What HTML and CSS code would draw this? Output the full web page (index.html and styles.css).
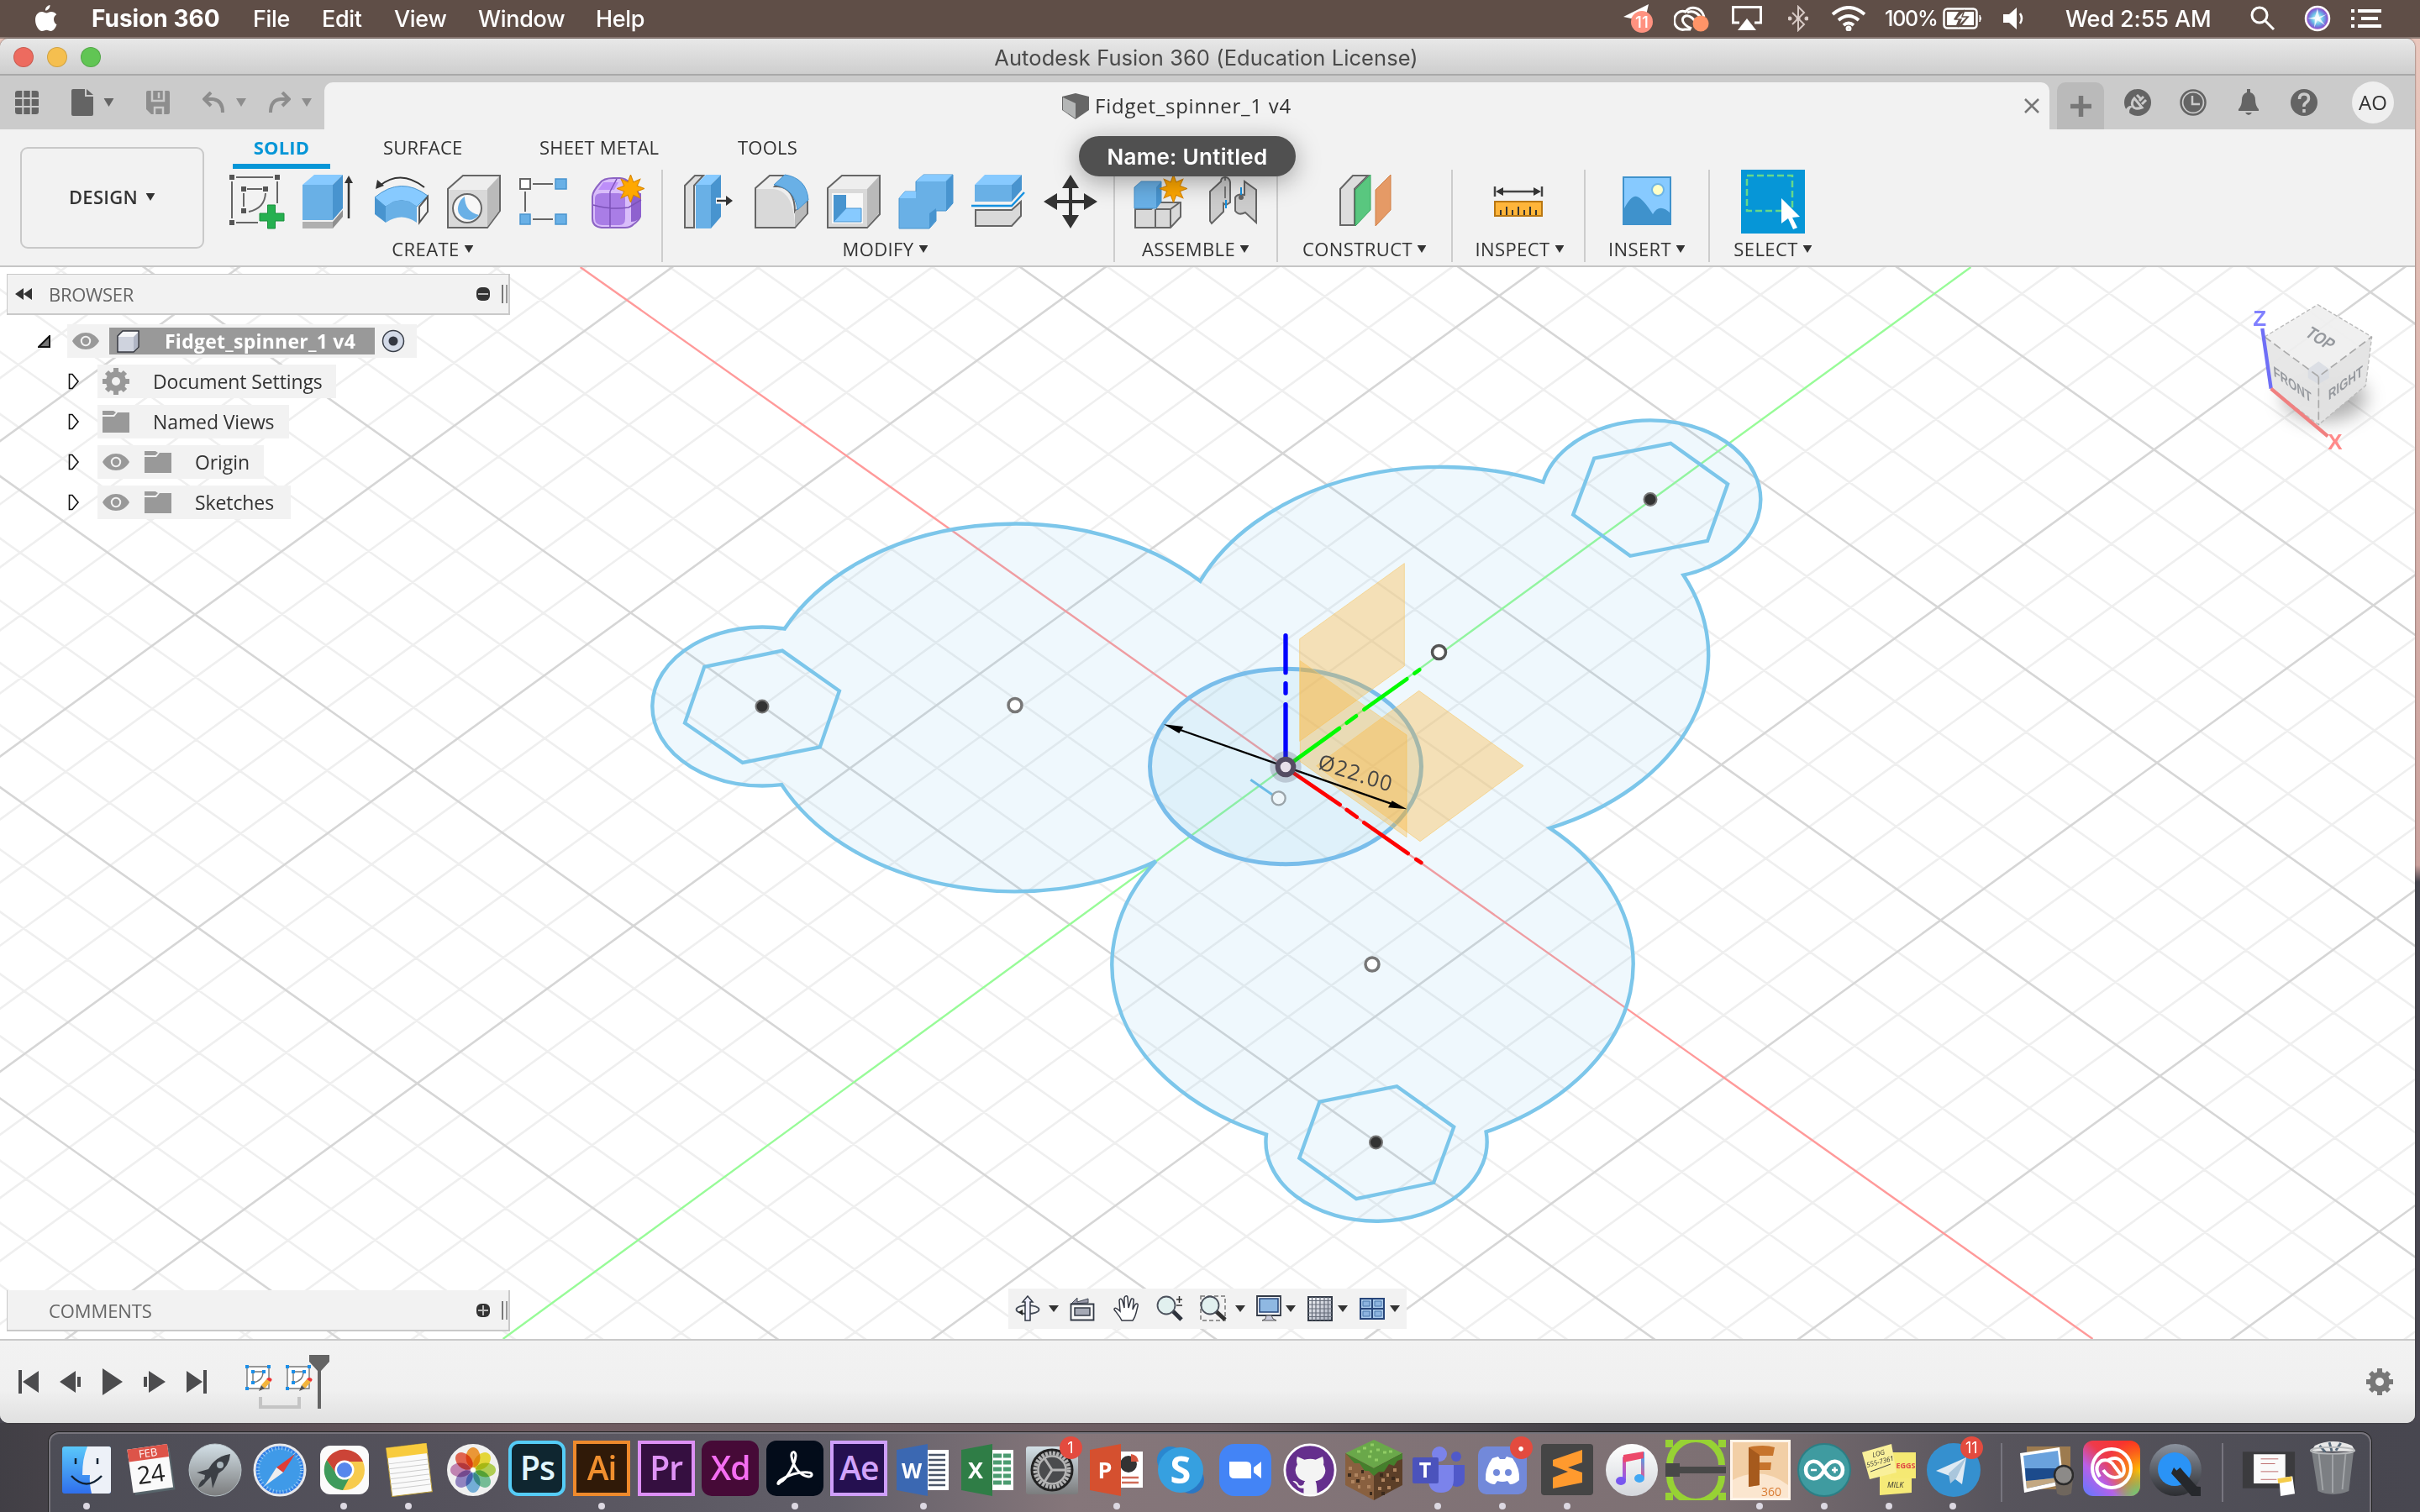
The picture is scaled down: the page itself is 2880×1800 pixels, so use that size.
FILE: index.html
```html
<!DOCTYPE html>
<html lang="en">
<head>
<meta charset="utf-8">
<title>Autodesk Fusion 360</title>
<link rel="stylesheet" href="styles.css">
</head>
<body>
<svg class="defs" width="0" height="0">
  <defs>
    <symbol id="eye" viewBox="0 0 32 20"><path d="M0 10C4 3 10 0 16 0s12 3 16 10c-4 7-10 10-16 10S4 17 0 10z" fill="#999"/><circle cx="16" cy="10" r="5.2" fill="#999" stroke="#f2f2f2" stroke-width="2"/></symbol>
    <symbol id="folder" viewBox="0 0 32 26"><path d="M0 0h13l3 2-3 3H0z" fill="#999"/><path d="M0 7h14l4-5h14v24H0z" fill="#999"/></symbol>
    <symbol id="closed" viewBox="0 0 14 20"><path d="M1.5 1.5h3.5l7 8.5-7 8.5H1.5z" fill="#fff" stroke="#111" stroke-width="1.6"/></symbol>
    <symbol id="down" viewBox="0 0 12 10"><path d="M0 0h12L6 10z" fill="currentColor"/></symbol>
    <symbol id="star" viewBox="-16 -16 32 32"><path d="M0-16 3.2-7.5 11-11 7.5-3.2 16 0 7.5 3.2 11 11 3.2 7.5 0 16-3.2 7.5-11 11-7.5 3.2-16 0-7.5-3.2-11-11-3.2-7.5z" fill="#ffa800" stroke="#d98600" stroke-width="1"/></symbol>
    <symbol id="sketchstep" viewBox="0 0 32 32"><path d="M2 2h26v26H2zM9 8h12q0 11-12 13z" fill="#fff" stroke="#777" stroke-width="1.4"/><path d="M0 0h4v4H0zM26 0h4v4h-4zM0 26h4v4H0zM7 6h4v4H7zM20 6h4v4h-4zM7 19h4v4H7z" fill="#1c8fe8"/><path d="M19 24l6-7 5 3-7 8z" fill="#f4b53c"/><path d="M25 17q2-3 5-1.500t0 4.500z" fill="#e33"/><path d="M19 24l4 4-7 3z" fill="#555"/></symbol>
    <linearGradient id="aqua" x2="0" y2="1"><stop offset="0" stop-color="#5ac8fa"/><stop offset="1" stop-color="#2f6fed"/></linearGradient>
    <linearGradient id="silver" x2="0" y2="1"><stop offset="0" stop-color="#d3e0e7"/><stop offset="1" stop-color="#7b7c7d"/></linearGradient>
    <linearGradient id="pearl" x2="0" y2="1"><stop offset="0" stop-color="#fff"/><stop offset="1" stop-color="#d4d7dc"/></linearGradient>
    <linearGradient id="steel" x2="1" y2="1"><stop offset="0" stop-color="#f7f8fb"/><stop offset="1" stop-color="#a9afbd"/></linearGradient>
    <linearGradient id="slate" x2="0" y2="1"><stop offset="0" stop-color="#8b929e"/><stop offset="1" stop-color="#2c2d31"/></linearGradient>
    <linearGradient id="note" y1="1" x2="1" y2="0"><stop offset="0" stop-color="#8a5cf0"/><stop offset=".5" stop-color="#f0508a"/><stop offset="1" stop-color="#3fa9f5"/></linearGradient>
    <linearGradient id="rainbow" x1="0" y1="1" x2="1" y2="0"><stop offset="0" stop-color="#5b7bff"/><stop offset=".3" stop-color="#b860e8"/><stop offset=".55" stop-color="#ee3b4b"/><stop offset="1" stop-color="#ff2d1c"/></linearGradient>
    <radialGradient id="sun" cx="1" cy=".55" r=".6"><stop offset="0" stop-color="#ffc400"/><stop offset="1" stop-color="#ff8a00" stop-opacity="0"/></radialGradient>
    <radialGradient id="leaf" cx="1" cy="1" r=".5"><stop offset="0" stop-color="#5fd87a"/><stop offset="1" stop-color="#5fd87a" stop-opacity="0"/></radialGradient>
    <radialGradient id="siri"><stop offset="0" stop-color="#fff"/><stop offset=".45" stop-color="#6dc7e8"/><stop offset=".8" stop-color="#7a62d8"/><stop offset="1" stop-color="#cf5bb0"/></radialGradient>
  </defs>
</svg>

<header class="menubar">
  <svg class="apple" width="26" height="32" viewBox="0 0 26 32"><path d="M17.500 0c.3 3-2.300 6.500-5.500 6.600C11.600 3.600 14.500.4 17.500 0zM22 17c0-3 1.500-4.600 3.300-5.800C23.600 9 21.300 8 19 8c-2.500 0-4 1.400-5.600 1.400C11.700 9.400 10 8 7.700 8 4 8 0 11.300 0 17.700 0 24.500 4.500 31 8 31c2 0 3-1.300 5.400-1.300S16.500 31 18.500 31c3 0 5.800-4.200 7-7.800C23.400 22.200 22 20 22 17z" fill="#fff"/></svg>
  <span class="menu m-name">Fusion 360</span><span class="menu m-file">File</span><span class="menu m-edit">Edit</span><span class="menu m-view">View</span><span class="menu m-window">Window</span><span class="menu">Help</span>
  <div class="status">
    <svg width="36" height="34" viewBox="0 0 36 34"><path d="M0 15 30 0 25 22 12 21 17 14 9 17z" fill="#fff"/><circle cx="22" cy="21" r="13" fill="#ff9280"/><text x="22" y="28" font-size="19" class="badgetext">11</text></svg>
    <svg width="44" height="32" viewBox="0 0 44 32"><g fill="none" stroke="#fff" stroke-width="3"><path d="M20 29H13a10 11 0 1 1 1-21C19 1 32 1 36 14"/><path d="M21 28C9 23 8 15 14 13s11 6 15 11M16 9c8-4 15 3 17 8"/></g><circle cx="32" cy="22" r="9.500" fill="#ff9468"/></svg>
    <svg width="38" height="30" viewBox="0 0 38 30"><path d="M10 20H2.500V1.500h33V20H28" fill="none" stroke="#fff" stroke-width="3"/><path d="M19 15l11 14H8z" fill="#fff"/></svg>
    <svg width="24" height="32" viewBox="0 0 24 32" fill="none" stroke="#d6c9c4" stroke-width="2"><path d="M5 9l14 14-7 7V2l7 7L5 23"/><circle cx="2" cy="16" r="1.500" fill="#fff"/><circle cx="22" cy="16" r="1.500" fill="#fff"/><circle cx="12" cy="16" r="1.500" fill="#fff"/></svg>
    <svg width="42" height="30" viewBox="0 0 42 30" fill="none" stroke="#fff" stroke-width="4"><path d="M2 10q19-16 38 0M9 17q12-10 24 0M15 23q6-5 12 0"/><circle cx="21" cy="27" r="1.500"/></svg>
    <span class="pct">100%</span>
    <svg width="48" height="26" viewBox="0 0 48 26"><rect x="1.500" y="1.500" width="39" height="23" rx="4" fill="none" stroke="#fff" stroke-width="2.500"/><path d="M5 5h14l-6 9h6l-3 7H5zM24 5h13v16H23l8-10h-7z" fill="#fff"/><path d="M26 3 15 14h7l-4 9 12-12h-7z" fill="#fff" stroke="#5f4e47" stroke-width="1.500"/><path d="M44 9v8q3-4 0-8z" fill="#fff" stroke="#fff"/></svg>
    <svg width="28" height="26" viewBox="0 0 28 26"><path d="M0 8h7l9-8v26l-9-8H0z" fill="#fff"/><path d="M20 7q4 6 0 12" stroke="#fff" stroke-width="2.500" fill="none"/></svg>
    <span class="clock">Wed 2:55 AM</span>
    <svg width="30" height="30" viewBox="0 0 30 30" fill="none" stroke="#fff" stroke-width="3"><circle cx="11" cy="11" r="9"/><path d="M18 18l10 10"/></svg>
    <svg width="32" height="32" viewBox="0 0 32 32"><circle cx="16" cy="16" r="14" fill="url(#siri)" stroke="#fff" stroke-width="2.500"/><path d="M16 4l2 10 9-3-8 5 6 8-9-6-4 9 1-10-9-1 9-2z" fill="#fff" opacity=".8"/></svg>
    <svg width="36" height="24" viewBox="0 0 36 24" stroke="#fff" stroke-width="4"><path d="M0 3h4M8 3h28M0 12h4M12 12h20M0 21h4M8 21h28"/></svg>
  </div>
</header>

<main class="window">
  <div class="titlebar"><i class="light red"></i><i class="light amber"></i><i class="light green"></i><span>Autodesk Fusion 360 (Education License)</span></div>

  <div class="tabstrip">
    <div class="quick">
      <svg width="28" height="28" viewBox="0 0 28 28"><rect width="28" height="28" rx="3" fill="#646464"/><path d="M9.300 0v28M18.700 0v28M0 9h28M0 19h28" stroke="#cbcbcb" stroke-width="2"/></svg>
      <svg class="q-file" width="26" height="32" viewBox="0 0 26 32"><path d="M2 0h14v9h10v21q0 2-2 2H2q-2 0-2-2V2q0-2 2-2zM18 0l8 7h-8z" fill="#646464"/></svg>
      <svg class="q-down dark" width="15" height="10" viewBox="0 0 12 10"><use href="#down"/></svg>
      <svg class="q-save" width="28" height="28" viewBox="0 0 28 28"><path d="M0 2q0-2 2-2h24q2 0 2 2v24q0 2-2 2H6l-6-6z" fill="#8d8d8d"/><path d="M7 0v12h14V0M10 28v-8h10v8M15 2v7" fill="none" stroke="#cbcbcb" stroke-width="2.500"/></svg>
      <svg class="q-undo" width="27" height="26" viewBox="0 0 27 26" fill="none" stroke="#8d8d8d" stroke-width="4"><path d="M10 1 2 9l8 8M2 9h10q12 1 12 16"/></svg>
      <svg class="q-down" width="14" height="10" viewBox="0 0 12 10"><use href="#down"/></svg>
      <svg class="q-redo" width="27" height="26" viewBox="0 0 27 26" fill="none" stroke="#8d8d8d" stroke-width="4"><path d="M17 1l8 8-8 8M25 9H15Q3 10 3 25"/></svg>
      <svg class="q-down" width="14" height="10" viewBox="0 0 12 10"><use href="#down"/></svg>
    </div>
    <div class="doctab">
      <svg width="32" height="31" viewBox="0 0 32 31"><path d="M0 4 16 0l16 4v16L16 31 0 20z" fill="#666"/><path d="M1 5l15 7v18L1 20z" fill="#b4b6b6"/></svg>
      <span>Fidget_spinner_1 v4</span>
      <svg class="close" width="18" height="18" viewBox="0 0 18 18"><path d="M1 1l16 16M17 1 1 17" stroke="#777" stroke-width="2.500"/></svg>
    </div>
    <div class="addtab"><svg width="25" height="25" viewBox="0 0 25 25"><path d="M12.500 0v25M0 12.500h25" stroke="#777" stroke-width="5.500"/></svg></div>
    <div class="utils">
      <svg width="32" height="32" viewBox="0 0 32 32"><circle cx="16" cy="16" r="16" fill="#646464"/><path d="M12 11l9 11q-9 3-11-2t2-9zM15 7l4 4M23 9l-5 5M26 13l-5 5" fill="none" stroke="#cbcbcb" stroke-width="3"/><path d="M0 32 2 24q4-6 8-3-6 3-3 10z" fill="#cbcbcb"/></svg>
      <svg width="32" height="32" viewBox="0 0 32 32"><circle cx="16" cy="16" r="14.500" fill="#cbcbcb" stroke="#646464" stroke-width="2.500"/><circle cx="16" cy="16" r="11.500" fill="#646464"/><path d="M15 8v10h9" fill="none" stroke="#cbcbcb" stroke-width="2.500"/></svg>
      <svg width="32" height="32" viewBox="0 0 32 32"><path d="M14 0h4v4q6 2 6 9 0 7 4 11v2H4v-2q4-4 4-11 0-7 6-9zM12 28h8q-4 6-8 0z" fill="#646464"/></svg>
      <svg width="32" height="32" viewBox="0 0 32 32"><circle cx="16" cy="16" r="16" fill="#646464"/><path d="M10.500 12q0-6 5.500-6t5.500 5q0 3-3 5t-2.500 5M16 24v4" fill="none" stroke="#cbcbcb" stroke-width="3.500"/></svg>
      <span class="avatar">AO</span>
    </div>
  </div>

  <div class="ribbon">
    <div class="workspace">DESIGN<svg width="12" height="9" viewBox="0 0 12 10"><use href="#down"/></svg></div>
    <div class="ribbonmain">
      <div class="modes"><span class="mode active">SOLID</span><span class="mode surface">SURFACE</span><span class="mode sheet">SHEET METAL</span><span class="mode">TOOLS</span></div>
      <div class="groups">
        <section class="group g-create">
          <div class="icons">
            <svg width="64" height="64" viewBox="0 0 64 64"><path d="M7 3h44M2 8v44M7 57h26M56 8v26M20 17h18M16 22v16M42 22q-1 18-20 22" fill="none" stroke="#666" stroke-width="2"/><path d="M-1 0h6v6h-6zM53 0h6v6h-6zM-1 54h6v6h-6zM13 14h6v6h-6zM39 14h6v6h-6zM13 40h6v6h-6z" fill="#555"/><path d="M44.500 36h9v10H64v9H53.500v9h-9v-9H35v-9h9.500z" fill="#26b050" stroke="#17903b"/></svg>
            <svg width="64" height="64" viewBox="0 0 64 64"><path d="M0 56h36v8H0z" fill="#b0b0b0"/><path d="M36 56l12-14v8L36 64z" fill="#8f8f8f"/><path d="M0 12h36v42H0z" fill="#69b0e6"/><path d="M0 12 14 0h34L36 12z" fill="#87caff"/><path d="M36 12 48 0v40L36 54z" fill="#4894cf"/><path d="M55 52V8" stroke="#333" stroke-width="2.500"/><path d="M50 10l5-9 5 9z" fill="#333"/></svg>
            <svg width="64" height="64" viewBox="0 0 64 64"><path d="M6 13Q31-7 59 15" fill="none" stroke="#333" stroke-width="2"/><path d="M1 17 3 6l8 7z" fill="#333"/><path d="M0 27q31-26 63-2L50 38q-18-15-37 0z" fill="#87caff" stroke="#4894cf"/><path d="M13 38q19-15 37 0v19q-18-13-37 0z" fill="#69b0e6"/><path d="M0 27l13 11v19L0 47z" fill="#4894cf"/><path d="M63 26v18L53 57V38z" fill="#f5f5f5" stroke="#555" stroke-width="2"/></svg>
            <svg width="64" height="64" viewBox="0 0 64 64"><path d="M1 63V17L19 1h44v42L48 63z" fill="#eee" stroke="#666" stroke-width="2"/><path d="M2 18h46v44H2z" fill="#d9d9d9"/><path d="M48 17 62 2v41L48 62z" fill="#bababa"/><circle cx="24" cy="40" r="17" fill="#f7f7f7" stroke="#666" stroke-width="2"/><path d="M21 26q0 18 17 22-8 9-18 4-10-6-6-17 2-6 7-9z" fill="#69b0e6"/></svg>
            <svg width="64" height="64" viewBox="0 0 64 64"><path d="M16 11h24M7 20v24M16 53h24" stroke="#666" stroke-width="2"/><path d="M1 5h12v12H1z" fill="#fff" stroke="#666" stroke-width="2"/><path d="M43 5h13v12H43zM1 47h12v12H1zM43 47h13v12H43z" fill="#69b0e6" stroke="#4894cf" stroke-width="1.500"/></svg>
            <svg width="64" height="64" viewBox="0 0 64 64"><path d="M1 26Q1 20 10 10q4-6 16-6h8q6 0 12 6l12 14v26q-2 5-8 9-4 4-10 4H12Q1 62 1 52z" fill="#d9bdfa" stroke="#8c63c4" stroke-width="2"/><path d="M4 28q0-6 8-6h20q8 0 8 6v24q0 8-7 8H13q-9 0-9-8z" fill="#a97de6"/><path d="M47 24 59 22v26q-3 8-12 8z" fill="#8e61cf"/><path d="M14 9h18l-5 9H8z" fill="#bd8ef9"/><path d="M22 20v42M2 36q20 6 42 3l15-9M22 20l8-15" stroke="#7c52b8" stroke-width="1.500" fill="none"/><use href="#star" x="30" y="0" width="33" height="33"/></svg>
          </div>
          <div class="label">CREATE<svg width="12" height="9" viewBox="0 0 12 10"><use href="#down"/></svg></div>
        </section>
        <section class="group g-modify">
          <div class="icons">
            <svg width="64" height="64" viewBox="0 0 64 64"><path d="M3 63V13L15 1h10L14 13v50z" fill="#ddd" stroke="#666" stroke-width="2"/><path d="M16 12h18v52H16z" fill="#69b0e6"/><path d="M16 12 28 0h18L34 12z" fill="#87caff"/><path d="M34 12 46 0v50L34 64z" fill="#4894cf"/><path d="M40 31h14" stroke="#fff" stroke-width="7"/><path d="M41 31h14" stroke="#333" stroke-width="2.500"/><path d="M52 25l8 6-8 6z" fill="#333"/></svg>
            <svg width="64" height="64" viewBox="0 0 64 64"><path d="M1 63V16L18 1h18L24 14h4q20 2 20 30l15-14v16L48 63z" fill="#eee" stroke="#666" stroke-width="2"/><path d="M2 17h20q25 2 26 45H2z" fill="#d9d9d9"/><path d="M48 44l14-13v15L48 62z" fill="#bababa"/><path d="M23 12 36 0q26 4 28 30L51 42Q48 16 23 12z" fill="#69b0e6" stroke="#4894cf"/></svg>
            <svg width="64" height="64" viewBox="0 0 64 64"><path d="M1 63V16L18 1h45v46L48 63z" fill="#eee" stroke="#666" stroke-width="2"/><path d="M2 17h46v45H2z" fill="#d9d9d9"/><path d="M48 17 62 2v44L48 62z" fill="#bababa"/><path d="M6 22h37v36H6z" fill="#f8f8f8"/><path d="M8 24h15v17L8 56z" fill="#4894cf"/><path d="M23 40h18v16H8z" fill="#87caff" stroke="#4894cf"/></svg>
            <svg width="64" height="64" viewBox="0 0 64 64"><path d="M0 28l7-8h13V8l9-8h35v34l-8 9H44v12l-8 9H0z" fill="#69b0e6" stroke="#4894cf"/><path d="M20 8l9-8h34l-8 8zM0 28l7-8h13v8z" fill="#87caff"/><path d="M56 8l8-8v34l-8 9zM36 46l8-6v14l-8 10z" fill="#4894cf"/></svg>
            <svg width="64" height="64" viewBox="0 0 64 64"><path d="M4 12h44v20H4z" fill="#69b0e6"/><path d="M4 12 16 0h44L48 12z" fill="#87caff"/><path d="M48 12 60 0v18L48 32z" fill="#4894cf"/><path d="M0 37h48L63 21" fill="none" stroke="#1591e0" stroke-width="2.500"/><path d="M5 42v19h43l11-12V32L48 42z" fill="#d9d9d9" stroke="#666" stroke-width="2"/></svg>
            <svg width="64" height="64" viewBox="0 0 64 64"><path d="M32 10v44M10 32h44" stroke="#333" stroke-width="4"/><path d="M32 0l10 16H22zM32 64l10-16H22zM0 32l16-10v20zM64 32 48 22v20z" fill="#333"/></svg>
          </div>
          <div class="label">MODIFY<svg width="12" height="9" viewBox="0 0 12 10"><use href="#down"/></svg></div>
        </section>
        <section class="group g-assemble">
          <div class="icons">
            <svg width="64" height="64" viewBox="0 0 64 64"><path d="M1 41v22h42l12-13V33H28L20 41z" fill="#d9d9d9" stroke="#666" stroke-width="2"/><path d="M25 41v22M26 41h17l11-8M43 41v21" stroke="#666" stroke-width="2" fill="none"/><path d="M0 15 8 8h24v24l-6 8H0z" fill="#69b0e6" stroke="#4894cf"/><path d="M26 15l6-7v24l-6 8z" fill="#4894cf"/><use href="#star" x="30" y="0" width="33" height="33"/></svg>
            <svg width="64" height="64" viewBox="0 0 64 64"><path d="M4 20 17 8q0-5 5-5t6 6v24l-5 3-3-2v10L6 58l-2-3z" fill="#ccc" stroke="#666" stroke-width="2"/><path d="M22 28V14M22 4v3" stroke="#777" stroke-width="2"/><path d="M59 57V18L45 8v16q-8-2-11 3v16q4 6 12 2z" fill="#ccc" stroke="#666" stroke-width="2"/><path d="M23 30v10M41 15v12" stroke="#1591e0" stroke-width="2"/><circle cx="41" cy="27" r="3" fill="#666"/></svg>
          </div>
          <div class="label">ASSEMBLE<svg width="12" height="9" viewBox="0 0 12 10"><use href="#down"/></svg></div>
        </section>
        <section class="group g-construct">
          <div class="icons"><svg width="64" height="64" viewBox="0 0 64 64"><path d="M3 60V17L18 1h18L20 17v43z" fill="#ddd" stroke="#666" stroke-width="2"/><path d="M21 18 39 0v42L21 61z" fill="#59c77f" stroke="#38a860"/><path d="M45 18 63 0v42L45 61z" fill="#e59a66" stroke="#d07f45"/></svg></div>
          <div class="label">CONSTRUCT<svg width="12" height="9" viewBox="0 0 12 10"><use href="#down"/></svg></div>
        </section>
        <section class="group g-inspect">
          <div class="icons"><svg width="64" height="64" viewBox="0 0 64 64"><path d="M4 14v12M60 14v12M12 20h40" stroke="#444" stroke-width="2.500"/><path d="M5 20l9-5v10zM59 20l-9-5v10z" fill="#333"/><path d="M4 32h56v17H4z" fill="#ffb53a" stroke="#b97712" stroke-width="2"/><path d="M11 42v6M18 38v10M25 42v6M32 38v10M39 42v6M46 38v10M53 42v6" stroke="#333" stroke-width="2"/></svg></div>
          <div class="label">INSPECT<svg width="12" height="9" viewBox="0 0 12 10"><use href="#down"/></svg></div>
        </section>
        <section class="group g-insert">
          <div class="icons"><svg width="64" height="64" viewBox="0 0 64 64"><path d="M4 3h56v56H4z" fill="#87caff" stroke="#3f92cc" stroke-width="2"/><circle cx="45" cy="18" r="7" fill="#ffffc8" stroke="#6fb5e5" stroke-width="2"/><path d="M4 42q9-18 16-16t19 21q8-14 21-1v13H4z" fill="#3f92cc"/></svg></div>
          <div class="label">INSERT<svg width="12" height="9" viewBox="0 0 12 10"><use href="#down"/></svg></div>
        </section>
        <section class="group g-select">
          <div class="icons"><svg class="big" width="76" height="76" viewBox="0 0 76 76"><path d="M0 0h76v76H0z" fill="#0696d7"/><path d="M7 7h54v42H7z" fill="none" stroke="#66d98a" stroke-width="2.500" stroke-dasharray="8 4"/><path d="M48 34l22 22-9 1 6 12-5 2-6-13-8 6z" fill="#fff"/></svg></div>
          <div class="label">SELECT<svg width="12" height="9" viewBox="0 0 12 10"><use href="#down"/></svg></div>
        </section>
      </div>
    </div>
    <div class="pill">Name: Untitled</div>
  </div>

  <div class="viewport">
    <svg class="canvas" width="2874" height="1276" viewBox="0 318 2874 1276">
      <path id="minor" class="minor"/>
      <path id="major" class="major"/>
      <path d="M690.600 318 2490.500 1594" stroke="#ff9a9a" stroke-width="2.400"/>
      <path d="M2345.500 318 1530 912.500 598.600 1594" stroke="#98fb98" stroke-width="2.400" fill="none"/>
      <path class="profile" d="M933.800 748.500A304.500 220.500 0 0 1 1428.400 691.700A311.500 224.500 0 0 1 1836.500 573.800A131 94.300 0 1 1 2003.500 684.700A312 224 0 0 1 1844.500 985.800A307.500 220.800 0 0 1 1768.600 1347.400A131.600 94.500 0 1 1 1507 1350.600A307.500 220.800 0 0 1 1375.700 1025.300A306 219.700 0 0 1 930.200 934.100A131 94.500 0 1 1 933.800 748.500Z"/>
      <g transform="matrix(.8929 0 0 .6378 740 480)">
        <path class="hex" d="M110 492 214 462 290 537 264 642 161 671 84 597ZM1296 103 1398 75 1474 151 1447 257 1344 285 1268 208ZM930 1304 1033 1275 1109 1351 1082 1455 979 1485 903 1409Z"/>
      </g>
      <ellipse class="bore" cx="1530" cy="912.500" rx="161.500" ry="116.200"/>
      <g transform="translate(1340 640) scale(.33333)">
        <g fill="#ffb029" fill-opacity=".33" stroke="#f7c768" stroke-opacity=".6" stroke-width="3"><path d="M620 362 994 92v367L620 727z"/><path d="M622 440l380 265v365L622 800z"/><path d="M1046 547l373 268-369 270-370-270z"/></g>
        <path d="M570 350v132M570 521v34M570 596v194" stroke="#0202fe" stroke-width="16" stroke-linecap="round"/>
        <path d="M600 798 762 681M788 662l34-25M850 614l153-109M1030 485l18-13" stroke="#02fb02" stroke-width="14" stroke-linecap="round"/>
        <path d="M600 842l164 112M788 972l36 26M850 1018l157 110M1036 1149l18 12" stroke="#fe0202" stroke-width="14" stroke-linecap="round"/>
        <path d="M160 675 980 962" stroke="#000" stroke-width="7"/>
        <path d="M135 667l70 8-15 24zM1003 970l-53-30-14 24z" fill="#000"/>
        <path d="M445 865l85 58" stroke="#6cbbe6" stroke-width="9"/>
        <circle cx="545" cy="931" r="24" fill="#eef6fa" stroke="#9aa4a9" stroke-width="7"/>
        <circle cx="570" cy="819" r="56" fill="#525366" opacity=".25"/><circle cx="570" cy="819" r="28" fill="#e8e0ea" stroke="#554c62" stroke-width="18"/>
        <text class="dim" transform="matrix(.95 .31 -.26 .97 682 824)">Ø22.00</text>
      </g>
      <g fill="#fff" stroke="#777" stroke-width="3.500"><circle cx="1712.500" cy="776.500" r="8" stroke="#555"/><circle cx="1208" cy="839.500" r="8"/><circle cx="1633" cy="1148" r="8"/></g>
      <g fill="#333" stroke="#777" stroke-width="2"><circle cx="907" cy="841" r="7.500"/><circle cx="1964" cy="594.500" r="7.500"/><circle cx="1637.500" cy="1360" r="7.500"/></g>
      <g transform="translate(2600 330) scale(.33333)">
        <ellipse class="cubeshadow" cx="500" cy="430" rx="150" ry="85"/>
        <path d="M475 98 668 213 478 355 285 213z" fill="#efefef" fill-opacity=".93"/>
        <path d="M285 213 478 355v172L310 400z" fill="#e6e6e6" fill-opacity=".96"/>
        <path d="M668 213 478 355v172l168-140z" fill="#e3e3e3" fill-opacity=".96"/>
        <path d="M440 328l38-27 37 27v32l-37 22-38-22z" fill="#d7dbe2" opacity=".8"/>
        <path d="M475 98 668 213 646 387 478 527 310 400M285 213 475 98" fill="none" stroke="#bbb" stroke-width="4" stroke-dasharray="14 8"/>
        <path d="M285 213 478 355 668 213M478 355v172" fill="none" stroke="#aaa" stroke-width="5" stroke-dasharray="28 14"/>
        <text class="face" font-size="62" transform="matrix(.7 .43 -.7 .76 426 208)">TOP</text>
        <text class="face" font-size="47" transform="matrix(.84 .6 .08 1.100 318 352)">FRONT</text>
        <text class="face" font-size="47" transform="matrix(.84 -.62 .02 1.100 513 440)">RIGHT</text>
        <path d="M277 183l31 215" stroke="#6f6ff6" stroke-width="13"/>
        <path d="M308 398l203 170" stroke="#f08080" stroke-width="13"/>
        <text class="axis" x="244" y="174" fill="#8080ff">Z</text>
        <text class="axis" x="511" y="615" fill="#ff8a8a">X</text>
      </g>
    </svg>
    <aside class="side">
      <div class="panelhead"><svg class="collapse" width="20" height="14" viewBox="0 0 20 14"><path d="M10 0v14L0 7zM20 0v14L10 7z" fill="#333"/></svg><span>BROWSER</span>
        <svg class="toggle" width="16" height="16" viewBox="0 0 16 16"><rect width="16" height="16" rx="6" fill="#333"/><path d="M2 8h12" stroke="#bbb" stroke-width="2"/></svg><i class="grip"></i></div>
      <div class="tree">
        <div class="row root"><svg class="tri" width="15" height="15" viewBox="0 0 15 15"><path d="M1 14H14V1z" fill="#777" stroke="#111" stroke-width="2"/></svg><div class="chip"><svg width="32" height="20"><use href="#eye"/></svg><div class="sel"><svg width="27" height="27" viewBox="0 0 27 27"><path d="M1 7l6-6h19v19l-6 6H1z" fill="#f5f6f9" stroke="#33363f" stroke-width="1.500"/><path d="M2 8h18v17H2z" fill="#cfd3de"/><path d="M20 8l5-5v17l-5 5z" fill="#b0b5c4"/></svg><b>Fidget_spinner_1 v4</b></div><svg width="28" height="28" viewBox="0 0 28 28"><circle cx="14" cy="14" r="12.500" fill="#d3dae8" stroke="#3a3f49" stroke-width="1.500"/><circle cx="14" cy="14" r="5.500" fill="#333742"/></svg></div></div>
        <div class="row"><svg class="dis" width="14" height="20"><use href="#closed"/></svg><div class="chip r-doc"><svg width="32" height="32" viewBox="-16 -16 32 32"><circle r="8.500" fill="none" stroke="#999" stroke-width="7"/><path d="M0-16v5M0 11v5M-16 0h5M11 0h5M-11-11l4 4M7 7l4 4M-11 11l4-4M7-7l4-4" stroke="#999" stroke-width="6"/></svg><span>Document Settings</span></div></div>
        <div class="row"><svg class="dis" width="14" height="20"><use href="#closed"/></svg><div class="chip r-views"><svg width="32" height="26"><use href="#folder"/></svg><span>Named Views</span></div></div>
        <div class="row"><svg class="dis" width="14" height="20"><use href="#closed"/></svg><div class="chip r-origin"><svg width="32" height="20"><use href="#eye"/></svg><svg class="f2" width="32" height="26"><use href="#folder"/></svg><span>Origin</span></div></div>
        <div class="row"><svg class="dis" width="14" height="20"><use href="#closed"/></svg><div class="chip r-sk"><svg width="32" height="20"><use href="#eye"/></svg><svg class="f2" width="32" height="26"><use href="#folder"/></svg><span>Sketches</span></div></div>
      </div>
      <div class="panelhead comments"><span>COMMENTS</span><svg class="toggle" width="16" height="16" viewBox="0 0 16 16"><rect width="16" height="16" rx="6" fill="#333"/><path d="M2 8h12M8 2v12" stroke="#bbb" stroke-width="2"/></svg><i class="grip"></i></div>
    </aside>
    <nav class="navbar">
      <svg width="30" height="32" viewBox="0 0 30 32"><ellipse cx="15" cy="17" rx="13.500" ry="5" fill="none" stroke="#444b57" stroke-width="1.800"/><path d="M12 30V8H9l6-7 6 7h-3v22z" fill="#eef" stroke="#333a46" stroke-width="1.500"/><path d="M9 17v7l-5-4z" fill="#222"/></svg>
      <svg class="n1" width="12" height="8" viewBox="0 0 12 8"><path d="M0 0h12L6 8z" fill="#333"/></svg>
      <svg class="n2" width="30" height="30" viewBox="0 0 30 30"><path d="M2 9 9 2v5l13-4v5z" fill="#99a" stroke="#444b57"/><path d="M1.500 9.500h27v19h-27z" fill="#fafafa" stroke="#333a46" stroke-width="1.800"/><path d="M6 14h18v9H6z" fill="#a5a9b5" stroke="#333a46" stroke-width="1.500"/></svg>
      <svg class="n3" width="32" height="32" viewBox="0 0 32 32"><path d="M10 30C7 24 4 21 1 17c0-3 3-2 7 2L7 6c1-3 3-2 4 1l2 8V3c1-3 4-3 4 0l1 12 3-10c1-2 4-1 3 2l-1 10 3-6c2-2 4-1 3 2-2 7-2 12-6 17z" fill="#fff" stroke="#343843" stroke-width="1.500"/></svg>
      <svg class="n4" width="32" height="32" viewBox="0 0 32 32"><path d="M20 19l10 10" stroke="#2e333d" stroke-width="5"/><circle cx="12" cy="12" r="10.500" fill="#e1f0ef" stroke="#4b515c" stroke-width="1.800"/><path d="M24 5h7M27.500 1v8M24 12h7" stroke="#333" stroke-width="1.500"/></svg>
      <svg class="n5" width="32" height="32" viewBox="0 0 32 32"><path d="M1 1h29v29H1z" fill="none" stroke="#777" stroke-width="1.500" stroke-dasharray="5 3"/><path d="M19 19l11 10" stroke="#333" stroke-width="5"/><circle cx="12" cy="12" r="10.500" fill="#e1f0ef" stroke="#4b515c" stroke-width="1.800"/></svg>
      <svg class="n6" width="12" height="8" viewBox="0 0 12 8"><path d="M0 0h12L6 8z" fill="#333"/></svg>
      <svg class="n7" width="30" height="32" viewBox="0 0 30 32"><path d="M1 1h28v23H1z" fill="#f2f4f8" stroke="#333a46" stroke-width="1.800"/><path d="M4 4h22v16H4z" fill="#8fb8e2" stroke="#27467a" stroke-width="1.500"/><path d="M12 24h6l2 4 4 2H7l4-2z" fill="#ccd" stroke="#555"/></svg>
      <svg class="n8" width="12" height="8" viewBox="0 0 12 8"><path d="M0 0h12L6 8z" fill="#333"/></svg>
      <svg class="n9" width="30" height="30" viewBox="0 0 30 30"><path d="M1 1h28v28H1z" fill="url(#steel)" stroke="#333a46" stroke-width="2"/><path d="M5.500 1v28M10 1v28M15 1v28M20 1v28M24.500 1v28M1 5.500h28M1 10h28M1 15h28M1 20h28M1 24.500h28" stroke="#666d7a" stroke-width="1.200"/></svg>
      <svg class="n10" width="12" height="8" viewBox="0 0 12 8"><path d="M0 0h12L6 8z" fill="#333"/></svg>
      <svg class="n11" width="30" height="26" viewBox="0 0 30 26"><path d="M1 1h28v24H1z" fill="#a9c9ea" stroke="#27467a" stroke-width="2"/><path d="M15 1v24M1 13h28" stroke="#27467a" stroke-width="2"/><path d="M4 4h8v6H4zM18 4h8v6h-8zM4 16h8v6H4zM18 16h8v6h-8z" fill="#8db4df" stroke="#4a78ad"/></svg>
      <svg class="n12" width="12" height="8" viewBox="0 0 12 8"><path d="M0 0h12L6 8z" fill="#333"/></svg>
    </nav>
  </div>

  <footer class="timeline">
    <svg width="24" height="28" viewBox="0 0 24 28"><path d="M0 0h4v28H0zM24 1v26L5 14z" fill="#4c4c4e"/></svg>
    <svg width="26" height="26" viewBox="0 0 26 26"><path d="M19 0v26L0 13zM21 7h4v12h-4z" fill="#4c4c4e"/></svg>
    <svg width="24" height="32" viewBox="0 0 24 32"><path d="M0 0v32l24-16z" fill="#4c4c4e"/></svg>
    <svg width="26" height="26" viewBox="0 0 26 26"><path d="M6 0v26l20-13zM0 7h4v12H0z" fill="#4c4c4e"/></svg>
    <svg width="24" height="28" viewBox="0 0 24 28"><path d="M20 0h4v28h-4zM0 1v26l19-13z" fill="#4c4c4e"/></svg>
    <svg class="track" width="104" height="66" viewBox="0 0 104 66"><use href="#sketchstep" x="0" y="13" width="32" height="32"/><use href="#sketchstep" x="48" y="13" width="32" height="32"/><path d="M18 51v12h46V51" fill="none" stroke="#c4c4c4" stroke-width="4"/><path d="M76 1h24v8L90 20v45h-4V20L76 9z" fill="#646464"/></svg>
    <svg class="gear" width="34" height="34" viewBox="-17 -17 34 34"><circle r="8.500" fill="none" stroke="#777" stroke-width="7"/><path d="M0-16v6M0 10v6M-16 0h6M10 0h6M-11-11l4 4M7 7l4 4M-11 11l4-4M7-7l4-4" stroke="#777" stroke-width="6"/></svg>
  </footer>
</main>

<div class="dock">
  <div class="slot run"><svg viewBox="0 0 64 64"><rect x="3" y="4" width="58" height="56" rx="3" fill="url(#aqua)"/><path d="M33 4h25q3 0 3 3v50q0 3-3 3H38q-3-13-2-22h-9Q27 18 33 4z" fill="#edf1f8"/><path d="M19 18v7M45 18v7M14 39q18 19 36 0" stroke="#123" stroke-width="2.500" fill="none"/></svg></div>
  <div class="slot"><svg viewBox="0 0 64 64"><g transform="rotate(-8 32 32)"><path d="M9 9h48v50H9z" fill="#57646a"/><path d="M7 4h48v52H7z" fill="#fafafa"/><path d="M7 4h48v15H7z" fill="#dd5449"/><text x="31" y="16" class="t" font-size="13" fill="#fff">FEB</text><text x="31" y="47" class="t" font-size="29" fill="#222">24</text></g></svg></div>
  <div class="slot"><svg viewBox="0 0 64 64"><circle cx="32" cy="32" r="31" fill="url(#silver)" stroke="#b5c0c5"/><path d="M50 13Q33 15 24 31l-14 4 10 3-2 11 9-9 2 14 7-18q13-8 14-23z" fill="#3b3f45"/><circle cx="38" cy="26" r="4" fill="#aab6bc"/><path d="M18 43q-5 3-6 10 7-2 9-8z" fill="#3b3f45"/></svg></div>
  <div class="slot"><svg viewBox="0 0 64 64"><circle cx="32" cy="32" r="30" fill="#2f7be4" stroke="#e8e8ea" stroke-width="3"/><circle cx="32" cy="32" r="26" fill="#3f9ae8" stroke="#9fcdf8" stroke-width="4" stroke-dasharray="1 3"/><path d="M50 13 28 29l8 6z" fill="#e13c34"/><path d="M14 51 28 29l8 6z" fill="#eee"/></svg></div>
  <div class="slot run"><svg viewBox="0 0 64 64"><rect x="3" y="3" width="58" height="58" rx="12" fill="#fbfbfb"/><circle cx="32" cy="32" r="24" fill="#f7cb4d"/><path d="M11 20A24 24 0 0 0 30 56l9-17-7-17-10 14z" fill="#3e9b5c"/><path d="M11 20A24 24 0 0 1 54 22H30l-8 14z" fill="#cc4437"/><circle cx="32" cy="32" r="11.500" fill="#fff"/><circle cx="32" cy="32" r="9" fill="#5787ec"/></svg></div>
  <div class="slot run"><svg viewBox="0 0 64 64"><g transform="rotate(-7 32 32)"><path d="M9 3h48v58H9z" fill="#fafafa" stroke="#b89a35"/><path d="M9 3h48v12H9z" fill="#f8cb3d"/><path d="M9 22h48M9 28h48M9 34h48M9 40h48M9 46h48M9 52h48" stroke="#ccc"/></g></svg></div>
  <div class="slot"><svg viewBox="-32 -32 64 64"><circle r="31" fill="#f0f0f0"/><g class="petals"><ellipse cy="-15" rx="8.500" ry="12" fill="#f9a13a"/><ellipse cy="-15" rx="8.500" ry="12" fill="#f3e43c" transform="rotate(45)"/><ellipse cy="-15" rx="8.500" ry="12" fill="#bada58" transform="rotate(90)"/><ellipse cy="-15" rx="8.500" ry="12" fill="#7cc8a0" transform="rotate(135)"/><ellipse cy="-15" rx="8.500" ry="12" fill="#7ab8e4" transform="rotate(180)"/><ellipse cy="-15" rx="8.500" ry="12" fill="#9a8ccc" transform="rotate(225)"/><ellipse cy="-15" rx="8.500" ry="12" fill="#cc8cbc" transform="rotate(270)"/><ellipse cy="-15" rx="8.500" ry="12" fill="#ee6a54" transform="rotate(315)"/></g><circle r="2.500" fill="#ffe"/></svg></div>
  <div class="slot"><div class="tile ps">Ps</div></div>
  <div class="slot run"><div class="tile ai">Ai</div></div>
  <div class="slot"><div class="tile pr">Pr</div></div>
  <div class="slot"><div class="tile xd">Xd</div></div>
  <div class="slot run"><div class="tile acro"><svg width="60" height="58" viewBox="0 0 60 58"><path d="M12 46c9-4 18-22 19-32 0-6-6-6-5 1 2 12 10 23 20 24 6 0 5-5 0-5-13-1-25 4-33 9-5 4-3 6-1 3z" fill="none" stroke="#fff" stroke-width="3"/></svg></div></div>
  <div class="slot"><div class="tile ae">Ae</div></div>
  <div class="slot run"><svg viewBox="0 0 64 64"><path d="M32 8h30v48H32z" fill="#fff"/><path d="M38 14h20M38 20h20M38 26h20M38 32h20M38 38h20M38 44h20M38 50h20" stroke="#4a5568" stroke-width="2.500"/><path d="M0 8 37 1v62L0 56z" fill="#3b68b2"/><text x="18" y="42" class="t b" font-size="25" fill="#fff">W</text></svg></div>
  <div class="slot"><svg viewBox="0 0 64 64"><path d="M32 8h30v48H32z" fill="#fff"/><path d="M38 15h21M38 23h21M38 31h21M38 39h21M38 47h21" stroke="#4b9b70" stroke-width="5" stroke-dasharray="10 2"/><path d="M0 8 37 1v62L0 56z" fill="#2f7d46"/><text x="17" y="42" class="t b" font-size="27" fill="#fff">X</text></svg></div>
  <div class="slot"><svg viewBox="0 0 64 64"><rect x="1" y="4" width="62" height="57" rx="3" fill="url(#silver)"/><circle cx="32" cy="32" r="24" fill="#2e2f31" stroke="#222" stroke-width="3"/><circle cx="32" cy="32" r="20" fill="#4a4b4d" stroke="#b5b5b5" stroke-width="5" stroke-dasharray="3 1.500"/><circle cx="32" cy="32" r="16.500" fill="none" stroke="#b5b5b5" stroke-width="2.500"/><path d="M32 32h17M32 32l-9-14M32 32l-9 14" stroke="#b5b5b5" stroke-width="3"/></svg><span class="badge">1</span></div>
  <div class="slot run"><svg viewBox="0 0 64 64"><path d="M32 10h31v43H32z" fill="#fff"/><circle cx="46" cy="25" r="10" fill="#333"/><path d="M49 22V13q8 1 9 9z" fill="#d5553e"/><path d="M38 41h20M38 47h20" stroke="#cf6b58" stroke-width="2.500"/><path d="M0 8 37 1v62L0 56z" fill="#d5502f"/><text x="18" y="42" class="t b" font-size="27" fill="#fff">P</text></svg></div>
  <div class="slot"><svg viewBox="0 0 64 64"><circle cx="20" cy="20" r="16" fill="#2a87cf"/><circle cx="44" cy="44" r="16" fill="#2a77c4"/><circle cx="32" cy="32" r="27" fill="#36a0e0"/><text x="32" y="48" class="t b" font-size="45" fill="#fff">S</text></svg></div>
  <div class="slot"><svg viewBox="0 0 64 64"><rect x="1" y="1" width="62" height="62" rx="18" fill="#4384f6"/><path d="M13 22h20q6 0 6 6v14H19q-6 0-6-6zM42 29l9-7v20l-9-7z" fill="#fff"/></svg></div>
  <div class="slot"><svg viewBox="0 0 68 68"><circle cx="34" cy="34" r="32" fill="#652f8d" stroke="#fff" stroke-width="3"/><path d="M18 17l9 4q8-2 14 0l9-4q2 6 1 10 5 8 0 15-3 5-10 6 2 4 2 17H26V57q-7 1-9-5l-5-4q5-1 8 5 3 2 6-1 0-3 2-4-7-1-10-6-5-8 0-15-2-5 0-10z" fill="#f4f4f4"/></svg></div>
  <div class="slot"><svg class="tall" viewBox="0 0 70 72"><path d="M35 0 69 16 35 34 1 16z" fill="#6aa84a"/><path d="M1 16l34 18v38L1 54z" fill="#89603f"/><path d="M69 16 35 34v38l34-18z" fill="#5c3f28"/><path d="M1 16l34 18 34-18v7l-6 2-4 6-6-2-6 9-6 0-6 5-6-6-5 0-6-9-6 0-7-8z" fill="#457f2c"/><path d="M15 14h4M22 10h4M31 6h4M38 12h4M46 15h4M28 20h4M36 24h4M30 14h3M53 14h4" stroke="#91cd65" stroke-width="3"/><path d="M5 34h4M12 42h4M20 46h4M8 50h4M27 56h4M16 56h3M28 44h3M44 48h4M58 36h4M51 57h4M40 58h4M61 48h4M50 42h3" stroke="#b08560" stroke-width="4"/><path d="M4 42h4M20 38h3M14 49h4M30 64h3M42 42h4M56 46h4M44 64h4" stroke="#3c2a1c" stroke-width="4"/></svg></div>
  <div class="slot run"><svg viewBox="0 0 64 64"><circle cx="33" cy="13" r="9" fill="#7b83eb"/><circle cx="53" cy="16" r="6" fill="#5059c9"/><path d="M46 26h17v17q0 8-9 9-7 0-8-7z" fill="#5059c9"/><path d="M20 26h30v18q-1 15-15 15T20 45z" fill="#7b83eb"/><rect x="1" y="17" width="31" height="31" rx="2" fill="#4b53bc"/><text x="16" y="41" class="t b" font-size="25" fill="#fff">T</text></svg></div>
  <div class="slot run"><svg viewBox="0 0 64 64"><rect x="3" y="4" width="58" height="57" rx="10" fill="#7289da"/><path d="M20 18l7-2 2 3h6l2-3 7 2q9 12 8 26-5 5-11 5l-3-4q-6 2-12 0l-3 4q-6 0-11-5-1-14 8-26z" fill="#fff"/><circle cx="25" cy="35" r="4" fill="#7289da"/><circle cx="39" cy="35" r="4" fill="#7289da"/></svg><span class="badge">•</span></div>
  <div class="slot run"><svg viewBox="0 0 64 64"><rect x="1" y="1" width="62" height="61" rx="4" fill="#454545"/><path d="M50 8v15l-17 6 17 6v12L15 54V41l18-7-18-7V20z" fill="#ff9a2e"/></svg></div>
  <div class="slot"><svg viewBox="0 0 64 64"><circle cx="32" cy="32" r="31" fill="url(#pearl)"/><path d="M23 44V18l22-5v28" fill="none" stroke="url(#note)" stroke-width="4"/><path d="M22 14l24-4v8l-24 5z" fill="#ec4a6b"/><ellipse cx="19" cy="45" rx="6" ry="5" fill="#7857f0"/><ellipse cx="41" cy="42" rx="6" ry="5" fill="#43a8f4"/></svg></div>
  <div class="slot"><svg class="tall" viewBox="0 0 72 72"><path d="M0 0h9v9H0zM63 0h9v9h-9zM0 63h9v9H0zM63 63h9v9h-9z" fill="#97d234"/><path d="M5 30a31 31 0 0 1 62 0M5 43a31 31 0 0 0 62 0" fill="none" stroke="#97d234" stroke-width="8"/><path d="M0 28h17v4h55v8H17v4H0z" fill="#484848"/></svg></div>
  <div class="slot run"><svg class="tall" viewBox="0 0 72 72"><path d="M0 0h72v72H0z" fill="#fff3e8"/><path d="M3 3h66v66H3z" fill="#f2cfa6"/><path d="M3 48q34-18 66 6v15H3z" fill="#fbe6cf"/><path d="M22 9q18-4 31 0l-2 10H35v8h14l-1 9H35v18l-13 2z" fill="#c7742c"/><path d="M22 9l13 9v36l-13 2z" fill="#a65a1d"/><text x="49" y="67" class="t" font-size="14" fill="#d97b33">360</text></svg></div>
  <div class="slot run"><svg viewBox="0 0 64 64"><circle cx="32" cy="32" r="31" fill="#3f9ba0" stroke="#2c7f85" stroke-width="2"/><path d="M32 32C24 16 10 21 10 32s14 16 22 0 22-11 22 0-14 16-22 0z" fill="none" stroke="#fff" stroke-width="4.500"/><path d="M16 32h7M41 32h7M44.500 28.500v7" stroke="#fff" stroke-width="2.500"/></svg></div>
  <div class="slot run"><svg viewBox="0 0 64 64"><path d="M21 29h38v30l-38 3z" fill="#f6ea78"/><path d="M34 11h31v31H34z" fill="#f5e973"/><path d="M0 11 35 1l6 34-32 8z" fill="#f9f09a"/><g class="hand"><text font-size="8" transform="translate(13 17) rotate(-15)">LOG</text><text font-size="8" transform="translate(6 29) rotate(-15)">555-7361</text><text font-size="9" x="30" y="53">MILK</text></g><path d="M10 34l24-9" stroke="#444"/><text x="52" y="30" class="t b" font-size="9" fill="#e04545">EGGS</text></svg></div>
  <div class="slot run"><svg viewBox="0 0 64 64"><circle cx="32" cy="32" r="32" fill="#3590cf"/><path d="M11 33 47 17l-5 32-12-9z" fill="#dfeaf3"/><path d="M47 17 26 36l2 12 7-6z" fill="#a9c6dc"/></svg><span class="badge">11</span></div>
  <i class="rule"></i>
  <div class="slot"><svg viewBox="0 0 64 64"><path d="M8 4h52v51H8z" fill="#9d7b4f"/><path d="M0 12l47-7 5 44L5 59z" fill="#fff"/><path d="M4 15l41-6 4 36-41 9z" fill="#6aa2dd"/><path d="M6 30l41 0 2 10-42 6z" fill="#1c4b8c"/><path d="M7 45l42-4v4L8 54z" fill="#c3a882"/><path d="M41 42q11 9 22 0l-2 18q-9 5-17 0z" fill="#6f665d"/><circle cx="52" cy="38" r="11" fill="#8c8a88" stroke="#2b2b2b" stroke-width="2.500"/></svg></div>
  <div class="slot"><svg class="wide" viewBox="0 0 68 66"><rect width="68" height="66" rx="12" fill="url(#rainbow)"/><rect width="68" height="66" rx="12" fill="url(#sun)"/><rect width="68" height="66" rx="12" fill="url(#leaf)"/><g fill="none" stroke="#fff" stroke-width="4"><circle cx="34" cy="33" r="23"/><path d="M20 43q-8-12 2-19 9-3 15 6l9 12M30 23q14-6 18 7t-10 14q-8 0-14-9"/></g></svg></div>
  <div class="slot"><svg viewBox="0 0 64 64"><circle cx="32" cy="32" r="31" fill="url(#slate)"/><circle cx="31" cy="31" r="20" fill="#2a93f6"/><path d="M30 29l20 22 12 1v11H51L42 52 27 36z" fill="#26282c"/><path d="M33 33l21 24" stroke="#26282c" stroke-width="12"/></svg></div>
  <i class="rule second"></i>
  <div class="slot"><svg viewBox="0 0 68 64"><path d="M1 9h66v46H1z" fill="#3b3b3e"/><path d="M15 12h40v37H15z" fill="#fafafa"/><path d="M24 18h22M24 24h18M24 34h22M24 44h20" stroke="#b66"/><path d="M47 42l17-2 3 22-18 3z" fill="#fff"/><path d="M45 43l18-3v6l-17 3z" fill="#f5cc4b"/></svg></div>
  <div class="slot"><svg class="bin" viewBox="0 0 60 68"><path d="M8 6q22-10 46 0l4 7H4z" fill="#e8e8e8"/><path d="M14 6l7 8M26 2l3 11M40 3l-6 9" stroke="#56697a" stroke-width="3"/><path d="M4 12q26 8 52 0L50 62q-20 8-38 0z" fill="#7c7f83"/><path d="M13 16l5 45M30 17v47M46 16l-4 44" stroke="#a2a5a8" stroke-width="2"/><ellipse cx="30" cy="12" rx="27" ry="4" fill="none" stroke="#b7b9bb" stroke-width="2"/></svg></div>
</div>
<script src="grid.js"></script>
</body>
</html>
```
FILE: styles.css
```css
* { box-sizing: border-box; }
html, body { margin: 0; }
body {
  width: 2880px; height: 1800px; overflow: hidden; position: relative;
  display: flex; flex-direction: column;
  font-family: "Open Sans", "Noto Sans", sans-serif; color: #333;
  background: linear-gradient(90deg, rgba(64,62,68,.9), rgba(120,96,100,.8) 22%, rgba(116,98,102,.8) 50%, rgba(64,62,68,.95) 66%, rgba(72,71,80,1)) 0 1694px no-repeat,
    linear-gradient(#ecc9bf, #c9a09c 1030px, #45444e 1050px, #4a4852);
}
svg { display: block; flex: none; }
svg.defs { position: absolute; }

.menubar {
  height: 46px; flex: none; display: flex; align-items: center; padding: 1px 46px 1px 42px;
  background: #5f4e47; border-bottom: 2px solid #8d7b74; color: #fff;
  font: 500 27px Inter, "Liberation Sans", sans-serif; letter-spacing: -.3px; white-space: nowrap;
}
.apple { margin-right: 41px; }
.menu { width: 86px; }
.m-name { width: 192px; font-size: 28px; font-weight: 700; letter-spacing: 0; }
.m-file { width: 82px; }
.m-window { width: 140px; }
.m-view { width: 100px; }
.status { margin-left: auto; display: flex; align-items: center; }
.status svg { margin-right: 24px; }
.status svg:nth-child(3) { margin-right: 30px; }
.status svg:nth-child(4) { margin-right: 27px; }
.status svg:nth-child(5) { margin-right: 22px; }
.pct { width: 69px; font-size: 25px; letter-spacing: -1.2px; }
.clock { width: 220px; margin-left: 22px; letter-spacing: -.1px; }
.status svg:nth-child(10) { margin-right: 34px; }
.status svg:last-child { margin-right: 0; }
.badgetext { fill: #fff; text-anchor: middle; letter-spacing: 0; }

.window { width: 2874px; height: 1648px; flex: none; border-radius: 10px; overflow: hidden; background: #f2f2f2; display: flex; flex-direction: column; box-shadow: 0 0 2px #333; }
.titlebar { height: 44px; flex: none; display: flex; align-items: center; gap: 16px; padding: 2px 0 0 16px; background: linear-gradient(#e8e8e8, #cecece); border-bottom: 2px solid #a9a9a9; }
.light { width: 24px; height: 24px; border-radius: 50%; border: 1px solid rgba(0,0,0,.15); }
.red { background: #ed6b5f; }
.amber { background: #f5bf4f; }
.green { background: #61c554; }
.titlebar span { flex: 1; text-align: center; padding-right: 139px; font: 25.500px Inter, sans-serif; color: #4a4a4a; letter-spacing: .08px; }

.tabstrip { height: 64px; flex: none; display: flex; background: #cbcbcb; padding-top: 8px; }
.quick { width: 386px; display: flex; align-items: center; padding: 0 0 8px 18px; color: #8d8d8d; }
.q-file { margin-left: 39px; }
.q-down { margin-left: 12px; }
.q-down.dark { color: #646464; margin-left: 11px; }
.q-save { margin-left: 37px; }
.q-undo { margin-left: 39px; }
.q-redo { margin-left: 25px; }
.doctab { width: 2053px; background: #f2f2f2; border-radius: 10px 10px 0 0; display: flex; align-items: center; padding: 0 12px 0 878px; }
.doctab span { margin: -2px 0 0 7px; font-size: 24px; letter-spacing: .75px; white-space: nowrap; }
.close { margin-left: auto; }
.addtab { width: 56px; margin-left: 9px; background: #bababa; border-radius: 10px 10px 0 0; display: grid; place-items: center; }
.utils { display: flex; align-items: center; gap: 34px; padding: 0 0 8px 24px; }
.avatar { width: 50px; height: 50px; margin: -1px 0 0 7px; border-radius: 50%; background: #efefef; display: grid; place-items: center; font-size: 24px; }

.ribbon { position: relative; height: 164px; flex: none; display: flex; border-bottom: 2px solid #c6c6c6; }
.workspace { width: 219px; height: 121px; margin: 21px 11px 0 24px; padding: 0 0 3px 0; border: 2px solid #c9c9c9; border-radius: 9px; display: flex; align-items: center; justify-content: center; gap: 9px; font-size: 22px; font-weight: 600; letter-spacing: .3px; }
.ribbonmain { display: flex; flex-direction: column; }
.modes { display: flex; height: 47px; padding-left: 23px; font-size: 22px; letter-spacing: .2px; }
.mode { height: 47px; padding-top: 6px; }
.mode.active { width: 116px; text-align: center; color: #0696d7; font-weight: 700; border-bottom: 6px solid #0696d7; }
.mode.surface { margin-left: 63px; width: 186px; }
.mode.sheet { width: 236px; }
.groups { display: flex; margin-top: 1px; }
.group { height: 110px; display: flex; flex-direction: column; align-items: center; padding-top: 5px; border-right: 2px solid #cdcdcd; }
.g-create { width: 535px; }
.g-create .label { padding-right: 11px; }
.g-modify { width: 538px; }
.g-modify .icons, .g-assemble .icons { padding-left: 4px; }
.g-modify .label { padding-right: 7px; }
.g-assemble { width: 194px; }
.g-construct { width: 208px; }
.g-inspect { width: 158px; }
.g-inspect .label { padding-left: 3px; }
.g-insert { width: 148px; }
.g-select { width: 150px; border-right: 0; }
.icons { display: flex; gap: 22px; height: 64px; margin-top: 1px; }
.icons svg { overflow: visible; }
.icons .big { margin: -6px 0; }
.label { display: flex; align-items: center; gap: 5px; font-size: 22px; letter-spacing: .4px; line-height: 30px; margin-top: 9px; white-space: nowrap; }
.pill { position: absolute; left: 1284px; top: 8px; width: 258px; height: 48px; border-radius: 24px; background: #505050; color: #fff; font: 600 26px/50px Inter, sans-serif; letter-spacing: .3px; text-align: center; box-shadow: 0 6px 30px rgba(0,0,0,.35); }

.viewport { position: relative; height: 1276px; flex: none; background: #fff; overflow: hidden; }
.canvas { position: absolute; left: 0; top: 0; }
.minor { stroke: #efefef; stroke-width: 2.600; fill: none; }
.major { stroke: #d6d6d6; stroke-width: 2.600; fill: none; }
.profile { fill: rgba(100,190,240,.1); stroke: #7cc6ea; stroke-width: 4.400; }
.hex { fill: none; stroke: #7cc6ea; stroke-width: 4.300px; vector-effect: non-scaling-stroke; }
.bore { fill: rgba(100,190,230,.11); stroke: #79bdea; stroke-width: 5; }
.dim { font-size: 76px; font-family: "Open Sans", sans-serif; font-weight: 400; fill: #444; letter-spacing: 4px; }
.face { font-family: "Liberation Sans", sans-serif; font-weight: 700; fill: #96999e; }
.axis { font: 700 78px "Liberation Sans", sans-serif; }
.cubeshadow { fill: rgba(0,0,0,.3); filter: blur(34px); }

.side { position: relative; width: 607px; height: 1267px; padding: 8px 0 0 8px; display: flex; flex-direction: column; }
.panelhead { height: 49px; flex: none; display: flex; align-items: center; background: #f2f2f2; border: 1px solid #c9c9c9; border-right-width: 2px; border-bottom-width: 2px; color: #666; font-size: 22px; letter-spacing: -.3px; padding-left: 9px; }
.collapse { margin-right: 20px; }
.toggle { margin-left: auto; }
.grip { width: 7px; height: 22px; margin: 0 1px 0 14px; border-left: 2px solid #777; border-right: 2px solid #999; }
.panelhead.comments { margin-top: auto; padding-left: 49px; border-top: 0; letter-spacing: -.1px; }
.tree { margin-top: 11px; display: flex; flex-direction: column; gap: 8px; font-size: 23px; letter-spacing: -.1px; }
.row { display: flex; align-items: center; height: 40px; padding-left: 73px; white-space: nowrap; }
.row.root { padding-left: 37px; }
.tri { margin-right: 20px; }
.dis { margin-right: 21px; }
.chip { height: 40px; display: flex; align-items: center; background: #f2f2f2; padding-left: 6px; }
.root .chip { width: 416px; }
.chip span { margin-left: 28px; }
.f2 { margin-left: 18px; }
.r-doc { width: 284px; }
.r-views { width: 228px; }
.r-origin { width: 198px; }
.r-sk { width: 230px; }
.sel { width: 316px; height: 32px; margin: 0 8px 0 12px; padding-left: 9px; display: flex; align-items: center; background: #999; color: #fff; }
.sel b { margin-left: 30px; letter-spacing: .25px; }

.navbar { position: absolute; left: 1200px; top: 1216px; width: 474px; height: 48px; display: flex; align-items: center; padding-left: 8px; background: #f2f2f2; }
.n1 { margin-left: 10px; }
.n2 { margin-left: 13px; }
.n3 { margin-left: 22px; }
.n4 { margin-left: 19px; }
.n5 { margin-left: 20px; }
.n6 { margin-left: 10px; }
.n7 { margin-left: 13px; }
.n8 { margin-left: 5px; }
.n9 { margin-left: 14px; }
.n10 { margin-left: 6px; }
.n11 { margin-left: 14px; }
.n12 { margin-left: 6px; }

.timeline { flex: 1; display: flex; align-items: center; gap: 25px; padding: 0 25px 1px 22px; border-top: 2px solid #c9c9c9; background: linear-gradient(#f2f2f2, #f0f0f0 60%, #e0e0e0); }
.track { margin-left: 21px; }
.gear { margin-left: auto; }

.dock { width: 2764px; height: 110px; margin: 11px 0 0 58px; flex: none; display: flex; padding: 8px 0 0 5px; border: 2px solid #77747c; border-radius: 12px; box-shadow: 0 0 0 1px #222;
  background: linear-gradient(90deg, #4d4d56, #55525c 18%, #625f69 34%, #85767a 44%, #7d7073 72%, #57545c 84%, #4b4b54); }
.slot { position: relative; width: 76.600px; height: 92px; flex: none; display: flex; flex-direction: column; align-items: center; padding-top: 3px; }
.slot > svg { width: 64px; height: 64px; }
.slot > svg.tall { width: 72px; height: 72px; margin-top: -4px; }
.slot > svg.wide { width: 68px; height: 66px; margin-top: -3px; }
.slot > svg.bin { width: 58px; height: 68px; margin-top: -4px; }
.slot.run::after { content: ""; position: absolute; left: 34px; bottom: 10px; width: 8px; height: 8px; border-radius: 50%; background: #dcd8e2; }
.petals ellipse { mix-blend-mode: multiply; }
.hand { fill: #333; font-family: "Open Sans", sans-serif; font-style: italic; }
.tile { width: 68px; height: 66px; margin-top: -3px; border: 4px solid; display: grid; place-items: center; font-size: 39px; font-weight: 600; line-height: 1; letter-spacing: -1px; padding-bottom: 4px; }
.tile.ps { border-color: #55ccf6; border-radius: 12px; background: #0f2630; color: #e2f6fe; }
.tile.ai { border-color: #ee8a2c; background: #301a08; color: #f08f2e; }
.tile.pr { border-color: #dd90f5; background: #350f40; color: #df93f6; }
.tile.xd { border-color: #460a37; border-radius: 12px; background: #460a37; color: #f56df2; }
.tile.ae { border-color: #cf9ffa; background: #251050; color: #d1a4fb; }
.tile.acro { border-color: #030c1a; border-radius: 12px; background: #030c1a; padding: 0; }
.t { text-anchor: middle; font-family: "Open Sans", sans-serif; }
.t.b { font-weight: 700; }
.badge { position: absolute; right: 3px; top: -5px; width: 27px; height: 27px; border-radius: 50%; background: #e34b3f; color: #fff; font: 18px/27px Inter, sans-serif; text-align: center; }
.rule { width: 2px; height: 70px; margin: 3px 15px 0 18px; background: #77757f; flex: none; }
.rule.second { margin: 3px 16px 0 16px; }
```
FILE: grid.js
```js
// Construction plane grid: unit steps along the X and Y axes in screen space.
const origin = [1530, 912.5];
const stepX = [261 / 5, 185.3 / 5];
const stepY = [257.5 / 5, -187.5 / 5];
let minor = "", major = "";
function line(base, dir) {
  const k = 70;
  return `M${base[0] - dir[0] * k} ${base[1] - dir[1] * k}L${base[0] + dir[0] * k} ${base[1] + dir[1] * k}`;
}
for (let i = -50; i <= 50; i++) {
  if (i === 0) continue;
  const alongX = line([origin[0] + stepY[0] * i, origin[1] + stepY[1] * i], stepX);
  const alongY = line([origin[0] + stepX[0] * i, origin[1] + stepX[1] * i], stepY);
  if (i % 5 === 0) major += alongX + alongY;
  else minor += alongX + alongY;
}
document.getElementById("minor").setAttribute("d", minor);
document.getElementById("major").setAttribute("d", major);
```
